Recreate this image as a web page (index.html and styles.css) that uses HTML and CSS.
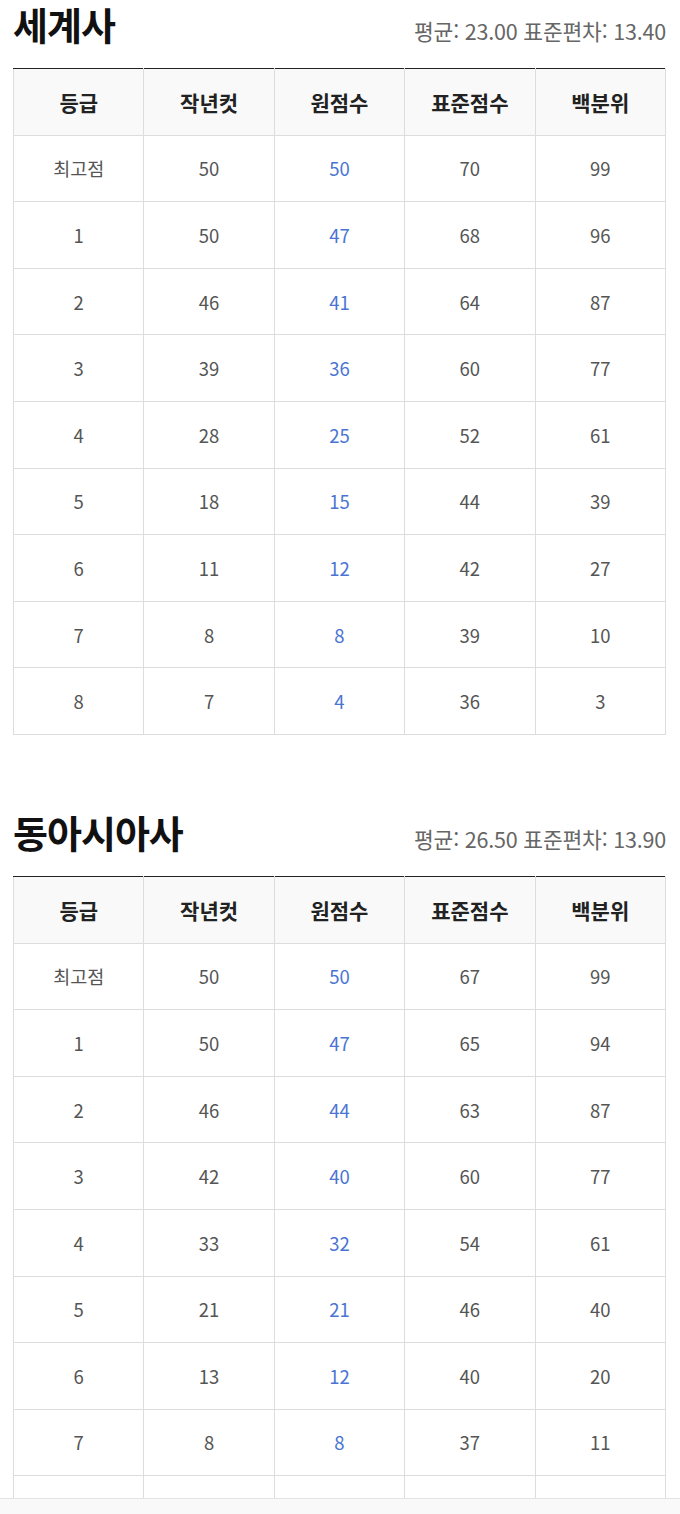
FILE: index.html
```html
<!DOCTYPE html>
<html lang="ko">
<head>
<meta charset="utf-8">
<link rel="stylesheet" href="styles.css">
</head>
<body>
<main class="page">
  <section class="subject">
    <div class="subject-head">
      <h2 class="subject-title">세계사</h2>
      <p class="subject-stats">평균: 23.00 표준편차: 13.40</p>
    </div>
    <table class="grade-table">
      <thead>
        <tr><th>등급</th><th>작년컷</th><th>원점수</th><th>표준점수</th><th>백분위</th></tr>
      </thead>
      <tbody>
        <tr><td>최고점</td><td>50</td><td class="raw">50</td><td>70</td><td>99</td></tr>
        <tr><td>1</td><td>50</td><td class="raw">47</td><td>68</td><td>96</td></tr>
        <tr><td>2</td><td>46</td><td class="raw">41</td><td>64</td><td>87</td></tr>
        <tr><td>3</td><td>39</td><td class="raw">36</td><td>60</td><td>77</td></tr>
        <tr><td>4</td><td>28</td><td class="raw">25</td><td>52</td><td>61</td></tr>
        <tr><td>5</td><td>18</td><td class="raw">15</td><td>44</td><td>39</td></tr>
        <tr><td>6</td><td>11</td><td class="raw">12</td><td>42</td><td>27</td></tr>
        <tr><td>7</td><td>8</td><td class="raw">8</td><td>39</td><td>10</td></tr>
        <tr><td>8</td><td>7</td><td class="raw">4</td><td>36</td><td>3</td></tr>
      </tbody>
    </table>
  </section>
  <section class="subject">
    <div class="subject-head">
      <h2 class="subject-title">동아시아사</h2>
      <p class="subject-stats">평균: 26.50 표준편차: 13.90</p>
    </div>
    <table class="grade-table">
      <thead>
        <tr><th>등급</th><th>작년컷</th><th>원점수</th><th>표준점수</th><th>백분위</th></tr>
      </thead>
      <tbody>
        <tr><td>최고점</td><td>50</td><td class="raw">50</td><td>67</td><td>99</td></tr>
        <tr><td>1</td><td>50</td><td class="raw">47</td><td>65</td><td>94</td></tr>
        <tr><td>2</td><td>46</td><td class="raw">44</td><td>63</td><td>87</td></tr>
        <tr><td>3</td><td>42</td><td class="raw">40</td><td>60</td><td>77</td></tr>
        <tr><td>4</td><td>33</td><td class="raw">32</td><td>54</td><td>61</td></tr>
        <tr><td>5</td><td>21</td><td class="raw">21</td><td>46</td><td>40</td></tr>
        <tr><td>6</td><td>13</td><td class="raw">12</td><td>40</td><td>20</td></tr>
        <tr><td>7</td><td>8</td><td class="raw">8</td><td>37</td><td>11</td></tr>
        <tr><td>8</td><td>6</td><td class="raw">4</td><td>33</td><td>4</td></tr>
      </tbody>
    </table>
  </section>
</main>
<div class="bottom-bar"></div>
</body>
</html>
```
FILE: styles.css
```css
html, body {
  margin: 0;
  padding: 0;
  background: #ffffff;
}
body {
  font-family: "Noto Sans CJK KR", "Noto Sans", sans-serif;
  color: #555555;
}
.page {
  padding: 0 14px 0 13px;
}
.subject + .subject {
  margin-top: 73px;
}
.subject-head {
  display: flex;
  justify-content: space-between;
  align-items: baseline;
  height: 68px;
}
.subject-title {
  margin: 0;
  font-size: 38px;
  line-height: 48px;
  font-weight: 700;
  color: #111111;
  letter-spacing: -1px;
}
.subject-stats {
  margin: 0;
  font-size: 21.5px;
  color: #666666;
  letter-spacing: -0.2px;
}
.grade-table {
  width: 100%;
  border-collapse: collapse;
  table-layout: fixed;
  border-top: 1px solid #222222;
}
.grade-table th,
.grade-table td {
  border: 1px solid #dddddd;
  text-align: center;
  height: 65.6px;
  padding: 0;
  font-size: 18.5px;
}
.grade-table thead tr:first-child th {
  border-top: 1px solid #222222;
}
.grade-table th {
  background: #f9f9f9;
  color: #222222;
  font-weight: 700;
  font-size: 21px;
}
.grade-table td {
  color: #555555;
}
.grade-table td.raw {
  color: #4a74d2;
}
.bottom-bar {
  position: fixed;
  left: 0;
  right: 0;
  bottom: 0;
  height: 15px;
  background: #f9f9f9;
  border-top: 1px solid #e3e3e3;
}
```
